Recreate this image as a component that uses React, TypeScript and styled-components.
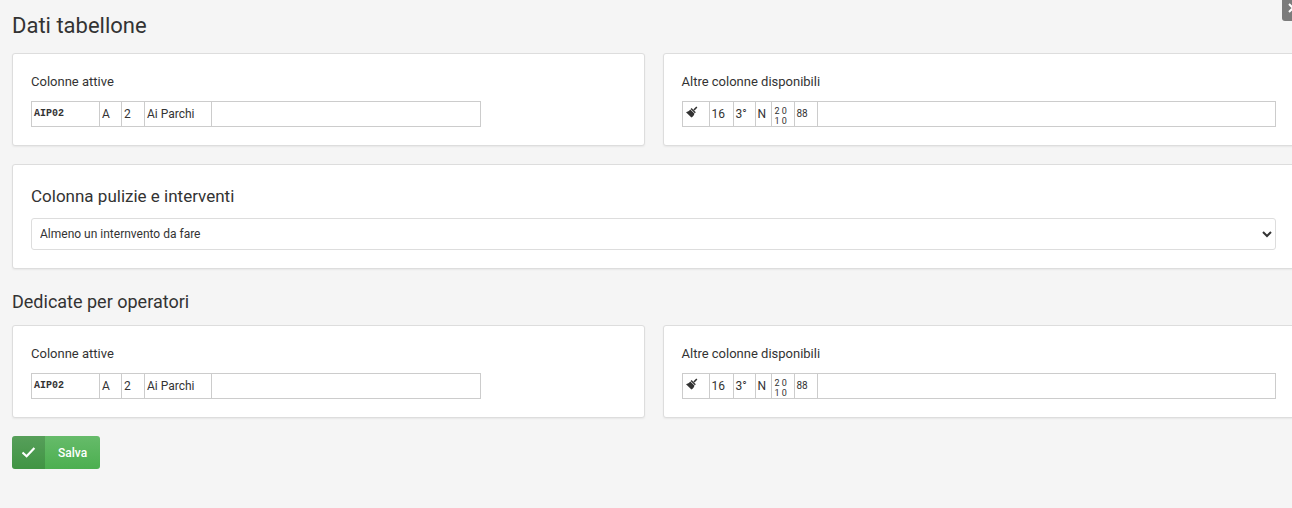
import React, { useId } from "react";
import styled, { createGlobalStyle } from "styled-components";

const GlobalStyle = createGlobalStyle`
  *, *::before, *::after { box-sizing: border-box; }
  body {
    margin: 0;
    background: #f5f5f5;
    color: #333;
    font: 400 13px/20px Roboto, sans-serif;
    overflow: hidden;
  }
`;

const Page = styled.main`
  position: relative;
  min-height: 100vh;
  overflow: hidden;
`;

const SettingsForm = styled.form`
  display: flex;
  flex-direction: column;
  margin: 0 -3px 0 12px;
  padding: 10px 0 36px;
`;

const PageTitle = styled.h1`
  margin: 0 0 11px;
  font-size: 22px;
  line-height: 32px;
  font-weight: 400;
`;

const SectionTitle = styled.h2`
  margin: 2px 0 10px;
  font-size: 18px;
  line-height: 26px;
  font-weight: 400;
`;

const CardGrid = styled.div`
  display: grid;
  grid-template-columns: 1fr 1fr;
  gap: 18px;
  margin-bottom: 18px;
`;

const Card = styled.section`
  min-width: 0;
  padding: 18px;
  background: #fff;
  border: 1px solid #ddd;
  border-radius: 3px;
  box-shadow: 0 1px 2px rgba(0, 0, 0, 0.06);
`;

const WideCard = styled(Card)`
  margin-bottom: 18px;
`;

const CardLabel = styled.h3`
  margin: 0 0 9px;
  font-size: 13px;
  line-height: 20px;
  font-weight: 400;
`;

const FieldLabel = styled.label`
  display: block;
  margin-bottom: 9px;
  font-size: 17px;
  line-height: 26px;
`;

const Select = styled.select`
  display: block;
  width: 100%;
  height: 32px;
  padding: 0 4px;
  border: 1px solid #ddd;
  border-radius: 3px;
  background: #fff;
  color: #333;
  font: 400 12px/18px Roboto, sans-serif;
`;

const ColumnList = styled.ul<{ $limited?: boolean }>`
  display: flex;
  height: 26px;
  max-width: ${(p) => (p.$limited ? "450px" : "none")};
  margin: 0;
  padding: 0;
  list-style: none;
  border: 1px solid #ccc;
`;

type CellKind = "text" | "code" | "small" | "stacked" | "icon";

const cellFonts: Record<CellKind, string> = {
  text: "font: 400 12px/24px Roboto, sans-serif;",
  code: 'font: 700 10px/24px "Liberation Mono", monospace;',
  small: "font: 400 10px/24px Roboto, sans-serif;",
  stacked: "font: 400 9px/10px Roboto, sans-serif; padding: 4px 3px 0;",
  icon: "padding: 4px 2px;",
};

const Cell = styled.li<{ $width: number; $kind: CellKind }>`
  flex: 0 0 ${(p) => p.$width}px;
  padding: 0 2px;
  border-right: 1px solid #ccc;
  white-space: nowrap;
  ${(p) => cellFonts[p.$kind]}

  svg { display: block; }
`;

const SaveButton = styled.button`
  display: flex;
  align-self: flex-start;
  height: 33px;
  padding: 0;
  overflow: hidden;
  border: 0;
  border-radius: 3px;
  background: linear-gradient(#66bb6a, #4caf50);
  color: #fff;
  font: 500 12px/34px Roboto, sans-serif;
  cursor: pointer;
`;

const SaveIcon = styled.span`
  display: grid;
  place-items: center;
  width: 33px;
  height: 33px;
  background: rgba(0, 0, 0, 0.15);
`;

const SaveText = styled.span`
  padding: 0 13px;
`;

const CloseTab = styled.button`
  position: absolute;
  top: 0;
  right: -12px;
  display: flex;
  align-items: center;
  width: 22px;
  height: 21px;
  padding: 0 0 5px 6px;
  border: 0;
  border-radius: 0 0 3px 3px;
  background: #7b7b7b;
  color: #fff;
  cursor: pointer;
`;

function BroomIcon() {
  return (
    <svg width="14" height="14" viewBox="0 0 14 14" fill="#333" aria-hidden="true">
      <path d="M11.3.4 12.4 1.4 9.6 4.5 8.3 3.5Z" />
      <path d="M6.6 2.1 10.8 6.2 9.8 7.2 5.6 3.1Z" />
      <path d="M5.2 3.5 9.4 7.6C9.2 9.2 8.1 10.7 6.4 11.6L1 6.2C2.6 5.7 4.3 4.9 5.2 3.5Z" />
    </svg>
  );
}

type Column = { width: number; kind: CellKind; content: React.ReactNode };

const activeColumns: Column[] = [
  { width: 68, kind: "code", content: "AIP02" },
  { width: 22, kind: "text", content: "A" },
  { width: 23, kind: "text", content: "2" },
  { width: 67, kind: "text", content: "Ai Parchi" },
];

const availableColumns: Column[] = [
  { width: 27, kind: "icon", content: <BroomIcon /> },
  { width: 24, kind: "text", content: "16" },
  { width: 22, kind: "text", content: "3°" },
  { width: 16, kind: "text", content: "N" },
  { width: 23, kind: "stacked", content: <>2 0<br />1 0</> },
  { width: 23, kind: "small", content: "88" },
];

function ColumnCard(props: { title: string; columns: Column[]; limited?: boolean }) {
  const id = useId();
  return (
    <Card>
      <CardLabel id={id}>{props.title}</CardLabel>
      <ColumnList aria-labelledby={id} $limited={props.limited}>
        {props.columns.map((c, i) => (
          <Cell key={i} $width={c.width} $kind={c.kind}>
            {c.content}
          </Cell>
        ))}
      </ColumnList>
    </Card>
  );
}

function ColumnCards() {
  return (
    <CardGrid>
      <ColumnCard title="Colonne attive" columns={activeColumns} limited />
      <ColumnCard title="Altre colonne disponibili" columns={availableColumns} />
    </CardGrid>
  );
}

export default function App() {
  return (
    <Page>
      <GlobalStyle />
      <SettingsForm onSubmit={(e) => e.preventDefault()}>
        <PageTitle>Dati tabellone</PageTitle>
        <ColumnCards />
        <WideCard>
          <FieldLabel htmlFor="interventi">Colonna pulizie e interventi</FieldLabel>
          <Select id="interventi">
            <option>Almeno un internvento da fare</option>
          </Select>
        </WideCard>
        <SectionTitle>Dedicate per operatori</SectionTitle>
        <ColumnCards />
        <SaveButton type="submit">
          <SaveIcon>
            <svg width="14" height="12" viewBox="0 0 14 12" fill="none" stroke="#fff" strokeWidth="2.2" aria-hidden="true">
              <path d="M.5 5.5 4.6 9.2 12.4 1" />
            </svg>
          </SaveIcon>
          <SaveText>Salva</SaveText>
        </SaveButton>
      </SettingsForm>
      <CloseTab type="button" aria-label="Chiudi">
        <svg width="10" height="10" viewBox="0 0 10 10" stroke="#fff" strokeWidth="2" aria-hidden="true">
          <path d="M1 1 9 9M9 1 1 9" />
        </svg>
      </CloseTab>
    </Page>
  );
}
